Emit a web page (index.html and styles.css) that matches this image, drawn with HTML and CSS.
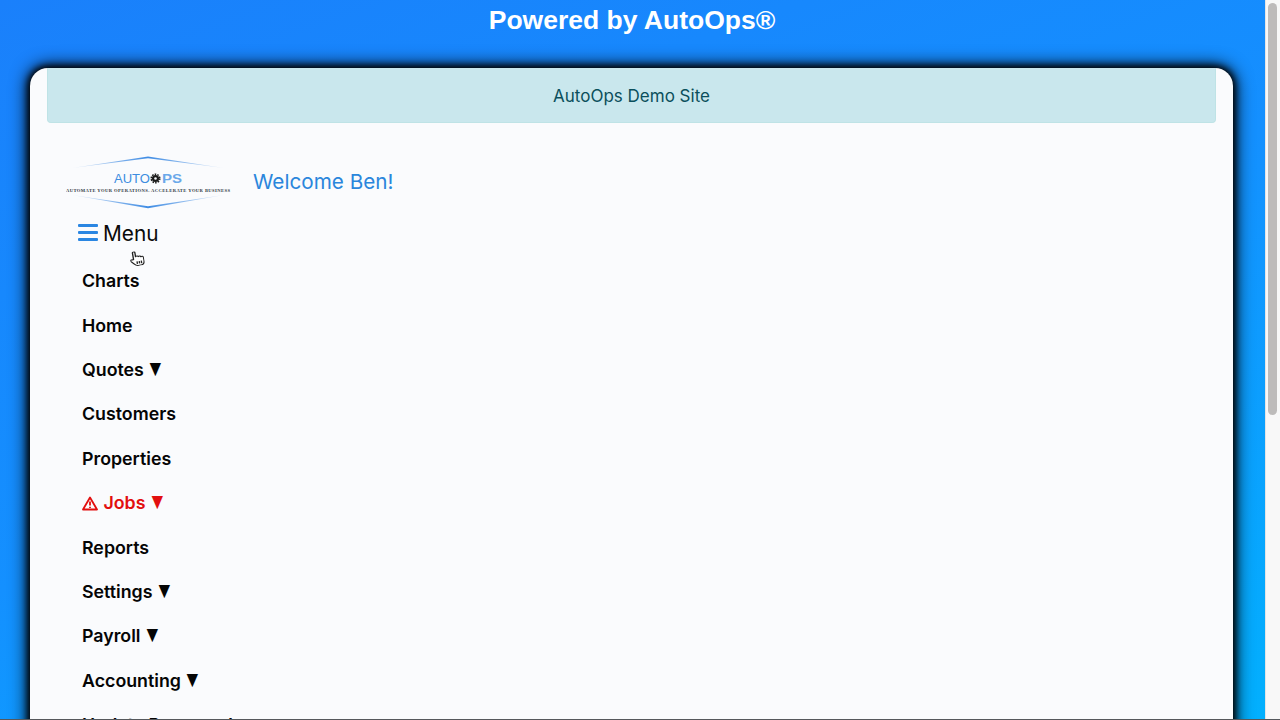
FILE: index.html
```html
<!DOCTYPE html>
<html lang="en">
<head>
<meta charset="utf-8">
<title>AutoOps</title>
<link rel="stylesheet" href="styles.css">
</head>
<body>
<div class="viewport">
  <div class="page">
    <h1 class="powered">Powered by AutoOps®</h1>
    <main class="card">
      <div class="notice">AutoOps Demo Site</div>
      <header class="brand">
        <svg class="logo" width="166" height="56" viewBox="0 0 166 56">
          <defs>
            <linearGradient id="fade">
              <stop offset="0" stop-color="#4a90e2" stop-opacity=".15"/>
              <stop offset=".5" stop-color="#3f8ce4"/>
              <stop offset="1" stop-color="#4a90e2" stop-opacity=".15"/>
            </linearGradient>
          </defs>
          <path class="logo-line" d="M6 12 82 .6 158 12 82 2.200Z"/>
          <path class="logo-line" d="M6 39 82 50.200 158 39 82 52.200Z"/>
          <text class="logo-auto" x="48" y="27" textLength="36" lengthAdjust="spacingAndGlyphs">AUTO</text>
          <circle class="logo-gear" cx="89.500" cy="22.500" r="3.600"/>
          <circle class="logo-gear-dots" cx="89.500" cy="22.500" r="4.300"/>
          <circle class="logo-gear-hole" cx="89.500" cy="22.500" r="1.300"/>
          <text class="logo-ps" x="96" y="27" textLength="20" lengthAdjust="spacingAndGlyphs">PS</text>
          <text class="logo-tag" x="82" y="36" text-anchor="middle" textLength="164" lengthAdjust="spacing">AUTOMATE YOUR OPERATIONS. ACCELERATE YOUR BUSINESS</text>
        </svg>
        <div class="welcome">Welcome Ben!</div>
      </header>
      <div class="menu-toggle">
        <svg class="burger" width="20" height="18" viewBox="0 0 20 18"><rect y="0" width="20" height="3" rx="1"/><rect y="7" width="20" height="3" rx="1"/><rect y="14" width="20" height="3" rx="1"/></svg>
        <span>Menu</span>
      </div>
      <nav class="nav">
        <a class="nav-item">Charts</a>
        <a class="nav-item">Home</a>
        <a class="nav-item">Quotes <span class="caret">▼</span></a>
        <a class="nav-item">Customers</a>
        <a class="nav-item">Properties</a>
        <a class="nav-item alert-item">
          <svg class="warn" width="16" height="15" viewBox="0 0 16 15"><path d="M8 1.500 15 13.500H1Z"/><path d="M8 5.500V9.500M8 10.800V12"/></svg>
          Jobs <span class="caret">▼</span></a>
        <a class="nav-item">Reports</a>
        <a class="nav-item">Settings <span class="caret">▼</span></a>
        <a class="nav-item">Payroll <span class="caret">▼</span></a>
        <a class="nav-item">Accounting <span class="caret">▼</span></a>
        <a class="nav-item">Update Password</a>
      </nav>
      <svg class="cursor" width="14" height="15" viewBox="2.200 .8 11.400 15.400" preserveAspectRatio="none"><path d="M5 9V2.200C5 .8 7 .8 7 2.200V6.500C7.300 5.700 9 5.700 9.200 6.800 9.500 6 11.200 6.200 11.300 7.400 11.800 6.800 13.300 7 13.300 8.400V11.500C13.300 14 12 15.800 10 15.800H8C6.500 15.800 5.800 15 5 13.800L2.700 10.500C2 9.300 3.400 8.300 4.300 9.200Z"/><path d="M7.500 11.500V14M9.300 11.500V14M11 11.500V14"/></svg>
    </main>
  </div>
  <div class="scrollbar"><div class="thumb"></div></div>
</div>
</body>
</html>
```
FILE: styles.css
```css
* { box-sizing: border-box; }
html, body { margin: 0; height: 100%; overflow: hidden; }
body { font-family: Inter, "Liberation Sans", sans-serif; background: #f7f7f7; }
.viewport { display: flex; width: 1280px; height: 720px; overflow: hidden; border-bottom: 1px solid #55585c; }
.page {
  width: 1265px;
  height: 719px;
  overflow: hidden;
  background: linear-gradient(160deg, #1a80fb 0%, #1490ff 50%, #02b0fe 100%);
}
.powered {
  margin: 0;
  height: 68px;
  padding-top: 5px;
  padding-right: 1px;
  text-align: center;
  font: 700 26.500px/30px "Liberation Sans", Arial, sans-serif;
  color: #fff;
}
.card {
  position: relative;
  width: 1203px;
  height: 700px;
  margin-left: 30px;
  padding: 0 17px;
  background: #fafbfd;
  border-radius: 18px 18px 0 0;
  box-shadow: 0 0 18px 2px #000, 0 0 7px 2px #000;
}
.notice {
  height: 55px;
  background: #c9e7ed;
  border: 1px solid #bfe3e6;
  border-top: 0;
  border-radius: 0 0 4px 4px;
  color: #0b4f5c;
  font-size: 17px;
  line-height: 56px;
  text-align: center;
}
.brand { display: flex; align-items: center; gap: 23px; margin-top: 33px; padding-left: 19px; height: 54px; }
.logo { display: block; flex: none; margin-top: 2px; }
.logo-line { fill: url(#fade); }
.logo-auto { font: 400 13px "Liberation Sans", sans-serif; fill: #3d8de0; }
.logo-ps { font: 700 13px "Liberation Sans", sans-serif; fill: #6aa8ea; }
.logo-gear { fill: #1a1a1a; }
.logo-gear-dots { fill: none; stroke: #1a1a1a; stroke-width: 1.500; stroke-dasharray: 1.600 1.100; }
.logo-gear-hole { fill: #fafbfd; }
.logo-tag { font: 700 4.600px "Liberation Serif", serif; fill: #2f3742; }
.welcome { color: #2a86dc; font-size: 20.700px; line-height: 28px; margin-top: -3px; margin-left: -2px; }
.menu-toggle {
  display: flex;
  align-items: center;
  gap: 5px;
  height: 30px;
  margin-top: 8px;
  padding-left: 31px;
  font-size: 20.800px;
  color: #0a0a0a;
}
.burger { fill: #2a86e2; display: block; }
.nav { display: flex; flex-direction: column; margin-top: 11.300px; padding-left: 35px; }
.nav-item {
  height: 44.400px;
  line-height: 44.400px;
  font-size: 17.800px;
  font-weight: 600;
  color: #050505;
  white-space: nowrap;
}
.caret { display: inline-block; width: 12px; margin-left: 1px; transform: scaleX(.72); transform-origin: left center; font-size: 17px; }
.alert-item { color: #e20f0f; }
.warn { vertical-align: -2px; margin-right: 1px; }
.warn path { fill: none; stroke: #e20f0f; stroke-width: 1.800; stroke-linejoin: round; }
.cursor { position: absolute; left: 100px; top: 183px; transform: rotate(-10deg); }
.cursor path { fill: #fff; stroke: #222; stroke-width: 1.100; stroke-linejoin: round; }
.scrollbar { flex: none; width: 15px; height: 719px; background: #f8f8f8; border-left: 1px solid #e4e4e4; padding: 3px 3px 0 2px; }
.thumb { height: 412px; background: #bdbbba; border-radius: 5px; }
```
